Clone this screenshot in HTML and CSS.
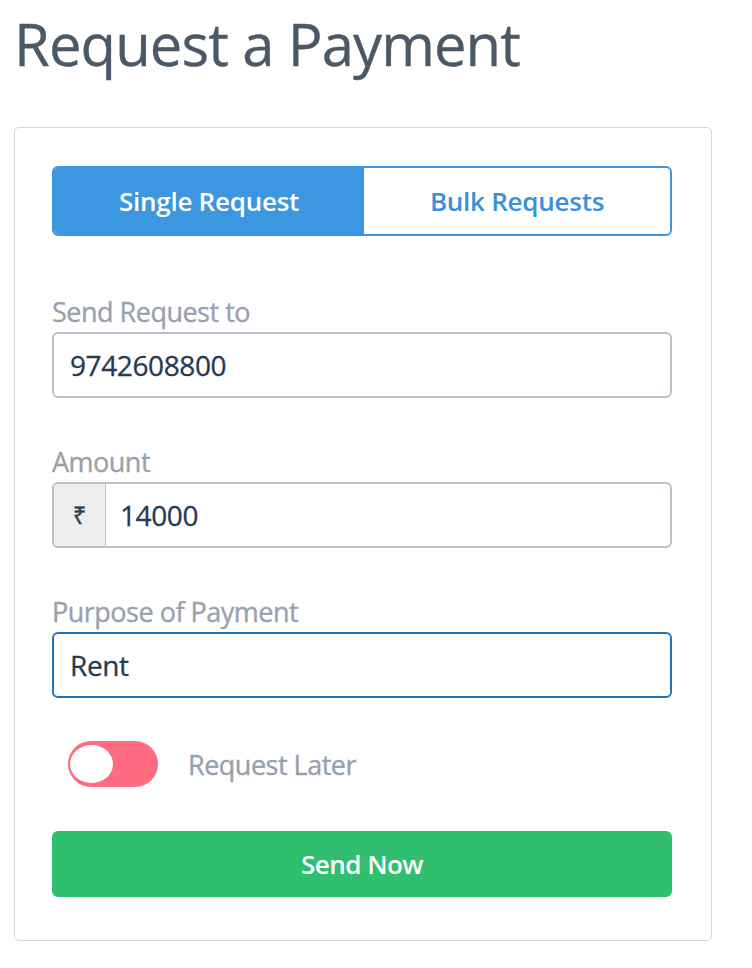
FILE: index.html
```html
<!DOCTYPE html>
<html>
<head>
<meta charset="utf-8">
<link rel="stylesheet" href="styles.css">
</head>
<body>
<h1 class="title">Request a Payment</h1>
<div class="card">
  <div class="tabs">
    <div class="tab tab-active">Single Request</div>
    <div class="tab">Bulk Requests</div>
  </div>
  <div class="field field-first">
    <div class="label">Send Request to</div>
    <div class="input">9742608800</div>
  </div>
  <div class="field">
    <div class="label">Amount</div>
    <div class="input input-group">
      <span class="prefix">₹</span>
      <span class="value">14000</span>
    </div>
  </div>
  <div class="field">
    <div class="label">Purpose of Payment</div>
    <div class="input input-focus">Rent</div>
  </div>
  <div class="toggle-row">
    <div class="toggle"><span class="knob"></span></div>
    <span class="toggle-label">Request Later</span>
  </div>
  <div class="btn">Send Now</div>
</div>
</body>
</html>
```
FILE: styles.css
```css
html, body {
  margin: 0;
  padding: 0;
  background: #ffffff;
}
body {
  padding: 0 40px 0 14px;
  font-family: "Open Sans", "Noto Sans", sans-serif;
}
.title {
  margin: 0;
  padding-top: 9px;
  height: 127px;
  box-sizing: border-box;
  font-size: 58px;
  font-weight: 400;
  color: #4b5967;
  line-height: 70px;
  letter-spacing: -0.9px;
  -webkit-text-stroke: 0.3px #4b5967;
}
.card {
  width: 698px;
  box-sizing: border-box;
  border: 1.5px solid #d3d6df;
  border-radius: 5px;
  padding: 37.5px 39px 43px 37px;
}
.tabs {
  display: flex;
  height: 70px;
  border: 2px solid #3c96e0;
  border-radius: 6px;
  box-sizing: border-box;
  overflow: hidden;
}
.tab {
  flex: 1;
  display: flex;
  align-items: center;
  justify-content: center;
  font-size: 26px;
  font-weight: 600;
  color: #3c8fdb;
  letter-spacing: -0.25px;
}
.tab-active {
  background: #3c96e0;
  color: #ffffff;
  flex: 0 0 310px;
}
.field {
  margin-top: 48px;
}
.field-first {
  margin-top: 60px;
}
.label {
  font-size: 27px;
  color: #98a1ae;
  line-height: 32px;
  letter-spacing: -0.5px;
  -webkit-text-stroke: 0.35px #98a1ae;
}
.input {
  margin-top: 4px;
  height: 66px;
  box-sizing: border-box;
  border: 2px solid #b9c1cd;
  border-radius: 6px;
  display: flex;
  align-items: center;
  padding-left: 16px;
  font-size: 28px;
  color: #263a50;
  letter-spacing: -0.4px;
  -webkit-text-stroke: 0.3px #263a50;
}
.input-group {
  padding-left: 0;
  overflow: hidden;
}
.prefix {
  width: 51px;
  height: 100%;
  background: #eeeeee;
  border-right: 1.5px solid #b9c1cd;
  display: flex;
  align-items: center;
  justify-content: center;
  font-size: 24px;
  color: #3a3f47;
}
.value {
  padding-left: 14px;
}
.input-focus {
  border-color: #1f74bd;
}
.toggle-row {
  display: flex;
  align-items: center;
  margin-top: 43.5px;
  padding-left: 16px;
  height: 46px;
}
.toggle {
  width: 90px;
  height: 46px;
  border-radius: 23px;
  background: #ff6b80;
  position: relative;
}
.knob {
  position: absolute;
  left: 1.5px;
  top: 4px;
  width: 43px;
  height: 38px;
  border-radius: 50%;
  background: #ffffff;
}
.toggle-label {
  margin-left: 30px;
  font-size: 27px;
  color: #95a0ae;
  letter-spacing: -0.5px;
  -webkit-text-stroke: 0.35px #95a0ae;
}
.btn {
  margin-top: 44px;
  height: 65.5px;
  border-radius: 6px;
  background: #2fbf6f;
  color: #ffffff;
  display: flex;
  align-items: center;
  justify-content: center;
  font-size: 26px;
  font-weight: 600;
  letter-spacing: -0.5px;
}
```
